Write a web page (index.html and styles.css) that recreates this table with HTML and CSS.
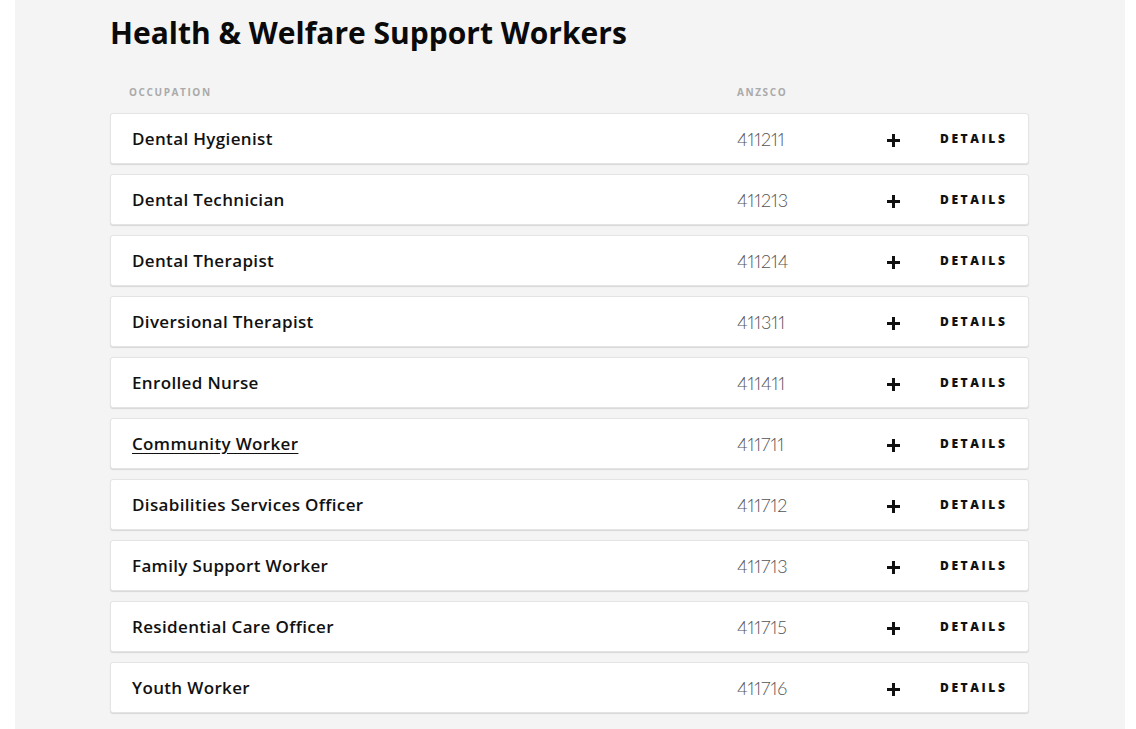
FILE: index.html
```html
<!DOCTYPE html>
<html lang="en">
<head>
<meta charset="utf-8">
<title>Health &amp; Welfare Support Workers</title>
<link rel="stylesheet" href="styles.css">
</head>
<body>
<main class="panel">
  <section class="content">
    <h1 class="title">Health &amp; Welfare Support Workers</h1>
    <div class="head-row">
      <span class="col-occ">Occupation</span>
      <span class="col-code">ANZSCO</span>
    </div>
    <ul class="list">
      <li class="card"><span class="name">Dental Hygienist</span><span class="code">411211</span><span class="plus"></span><span class="details">Details</span></li>
      <li class="card"><span class="name">Dental Technician</span><span class="code">411213</span><span class="plus"></span><span class="details">Details</span></li>
      <li class="card"><span class="name">Dental Therapist</span><span class="code">411214</span><span class="plus"></span><span class="details">Details</span></li>
      <li class="card"><span class="name">Diversional Therapist</span><span class="code">411311</span><span class="plus"></span><span class="details">Details</span></li>
      <li class="card"><span class="name">Enrolled Nurse</span><span class="code">411411</span><span class="plus"></span><span class="details">Details</span></li>
      <li class="card"><span class="name link">Community Worker</span><span class="code">411711</span><span class="plus"></span><span class="details">Details</span></li>
      <li class="card"><span class="name">Disabilities Services Officer</span><span class="code">411712</span><span class="plus"></span><span class="details">Details</span></li>
      <li class="card"><span class="name">Family Support Worker</span><span class="code">411713</span><span class="plus"></span><span class="details">Details</span></li>
      <li class="card"><span class="name">Residential Care Officer</span><span class="code">411715</span><span class="plus"></span><span class="details">Details</span></li>
      <li class="card"><span class="name">Youth Worker</span><span class="code">411716</span><span class="plus"></span><span class="details">Details</span></li>
    </ul>
  </section>
</main>
</body>
</html>
```
FILE: styles.css
```css
html, body {
  margin: 0;
  padding: 0;
  background: #ffffff;
}
body {
  font-family: "Open Sans", "Lato", sans-serif;
  color: #111;
}
.panel {
  margin-left: 15px;
  width: 1110px;
  min-height: 729px;
  background: #f4f4f4;
}
.content {
  padding: 14px 0 20px 95px;
  width: 919px;
}
.title {
  margin: 0;
  font-size: 30px;
  line-height: 38px;
  font-weight: 700;
  letter-spacing: 0;
  color: #0a0a0a;
}
.head-row {
  display: flex;
  margin-top: 30px;
  height: 20px;
  align-items: center;
  font-size: 10px;
  font-weight: 700;
  letter-spacing: 1.6px;
  text-transform: uppercase;
  color: #aaaaaa;
}
.col-occ {
  padding-left: 19px;
  width: 608px;
}
.list {
  list-style: none;
  margin: 11px 0 0;
  padding: 0;
  display: flex;
  flex-direction: column;
  gap: 10px;
}
.card {
  display: flex;
  align-items: center;
  height: 49px;
  background: #fff;
  border: 1px solid #e4e4e4;
  border-radius: 3px;
  box-shadow: 0 1px 1px rgba(0,0,0,0.12);
  padding-left: 21px;
}
.name {
  width: 605px;
  font-size: 17px;
  font-weight: 600;
  letter-spacing: 0.35px;
  color: #111;
}
.name.link {
  text-decoration: underline;
  text-underline-offset: 3px;
}
.code {
  width: 150px;
  font-family: "Lato", sans-serif;
  font-variant-numeric: proportional-nums;
  font-size: 18px;
  font-weight: 300;
  color: #555;
}
.plus {
  position: relative;
  width: 13px;
  height: 13px;
  margin-top: 3px;
  margin-right: 40px;
}
.plus::before, .plus::after {
  content: "";
  position: absolute;
  background: #111;
}
.plus::before {
  left: 0; right: 0; top: 5px; height: 3px;
}
.plus::after {
  top: 0; bottom: 0; left: 5px; width: 3px;
}
.details {
  font-size: 12px;
  font-weight: 800;
  letter-spacing: 2.6px;
  text-transform: uppercase;
  color: #111;
}
```
